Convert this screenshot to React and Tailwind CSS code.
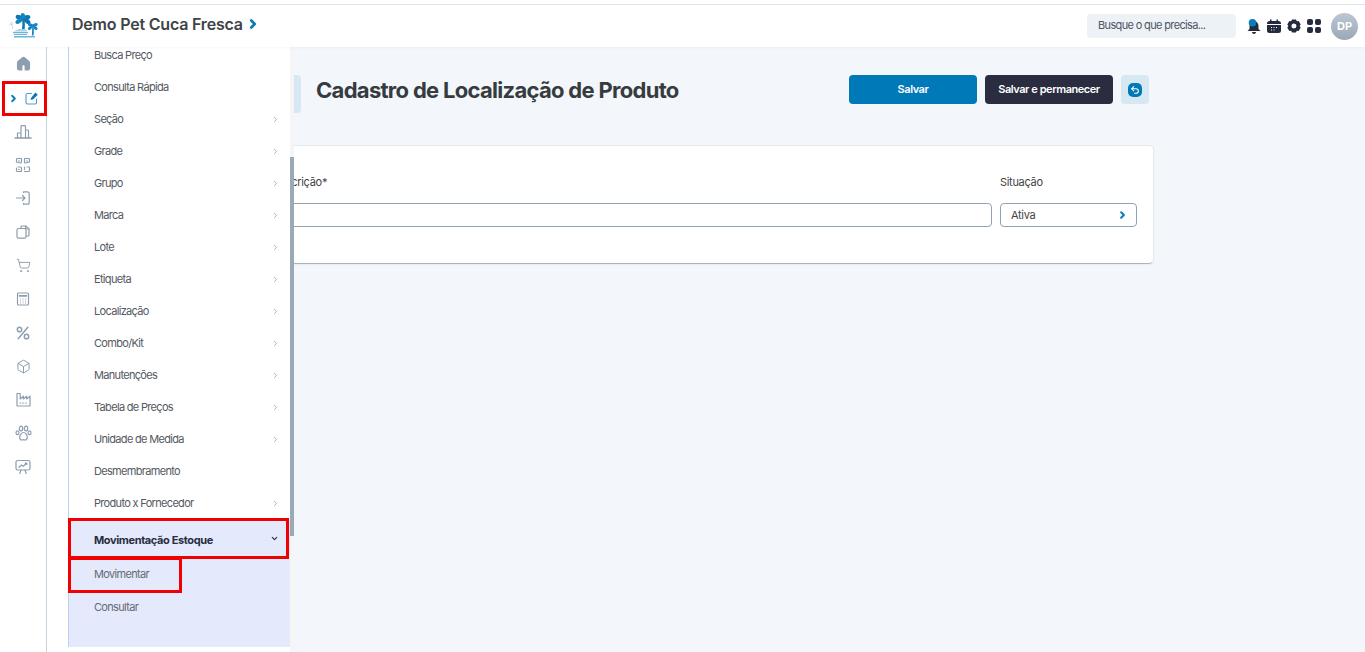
import React from "react";
import { ChevronRight, ChevronDown, Undo2, ShoppingCart, Box } from "lucide-react";

const font = { fontFamily: "Inter, 'Liberation Sans', sans-serif" };
const G = "#8d9eae";

function Svg({ size = 16, box = 16, children, sw = 1.2 }) {
  return (
    <svg viewBox={`0 0 ${box} ${box}`} width={size} height={size} fill="none" stroke={G} strokeWidth={sw} strokeLinecap="round" strokeLinejoin="round">
      {children}
    </svg>
  );
}

const HomeI = () => (
  <svg viewBox="0 0 16 16" width="15" height="15">
    <path fillRule="evenodd" fill={G} d="M8 .8c.6 0 1 .2 1.500.6l4.600 3.800c.6.5.9 1.100.9 1.900V13a2.500 2.500 0 0 1-2.500 2.500H3.500A2.500 2.500 0 0 1 1 13V7.100c0-.8.3-1.400.9-1.900l4.600-3.800C7 1 7.400.8 8 .8zM6.800 15.500h2.400V11a1.200 1.200 0 0 0-2.400 0z" />
  </svg>
);
const ShareI = () => (
  <svg viewBox="0 0 14 14" width="14" height="14" fill="none">
    <path d="M6.500 2.500H2.500A1.500 1.500 0 0 0 1 4v7.500A1.500 1.500 0 0 0 2.500 13H10a1.500 1.500 0 0 0 1.500-1.500V8" stroke="#4f9cc8" strokeWidth="1.100" strokeLinecap="round" />
    <path d="M5.500 8.800 6 7 10.300 1.600 12.800 3.700 8 8.600z" fill="#0f78b4" />
  </svg>
);
const BuildI = () => (
  <Svg size={18} box={18}>
    <path d="M1 16h16" strokeWidth="1.500" />
    <path d="M3.500 16v-5h3.500M7 16V4.500c0-.5.300-.8.800-.8h2.900c.5 0 .8.300.8.800V16M11.500 8h2.200c.5 0 .8.300.8.800V16" />
  </Svg>
);
const QrI = () => (
  <Svg size={16}>
    <path d="M1.500 5V2.500a1 1 0 0 1 1-1H6.500v3.500a1 1 0 0 1-1 1zM14.500 5V2.500a1 1 0 0 0-1-1H9.500v3.500a1 1 0 0 0 1 1zM1.500 11v2.500a1 1 0 0 0 1 1H6.500V11a1 1 0 0 0-1-1H3M9.500 14.500h4a1 1 0 0 0 1-1V11M9.500 10v2.500M12 10h2.500" />
    <path d="M4 4h.1M12 4h.1M4 12.400h.1" strokeWidth="1.500" />
  </Svg>
);
const LoginI = () => (
  <Svg size={16}>
    <path d="M8.500 2.500V1.800h3.700a2 2 0 0 1 2 2v8.400a2 2 0 0 1-2 2H8.500v-.8" />
    <path d="M1.500 8h8.500M7.500 5.500 10 8l-2.500 2.500" />
  </Svg>
);
const CopyI = () => (
  <Svg size={14} box={14}>
    <path d="M5 3V2a1 1 0 0 1 1-1h3.800L13 4v6a1 1 0 0 1-1 1h-2" />
    <rect x="1" y="3.500" width="9" height="9.700" rx="1.500" />
    <path d="M9.500 1v3H13" />
  </Svg>
);
const CalcI = () => (
  <Svg size={14} box={14}>
    <rect x="1.500" y="1" width="11" height="12" rx="1" />
    <path d="M3.500 3.800h7" strokeWidth="1.800" />
    <path d="M4 7h.8M6.600 7h.8M9.200 7h.8M4 9h.8M6.600 9h.8M9.200 9h.8M4 11h.8M6.600 11h.8M9.200 11h.8" strokeWidth="1" strokeLinecap="butt" />
  </Svg>
);
const PercentI = () => (
  <Svg size={14} box={16} sw={1.7}>
    <path d="M13.500 1.500 2.500 14.500" />
    <ellipse cx="4" cy="4" rx="2.500" ry="2.700" />
    <ellipse cx="12" cy="12" rx="2.500" ry="2.700" />
  </Svg>
);
const FactoryI = () => (
  <Svg size={15} box={15}>
    <path d="M1 14V1.500h3.200V7l3.200-2.800V7l3.200-2.800V7L14 4.200V14z" />
    <path d="M4 11h.8M6.800 11h.8M9.600 11h.8" />
  </Svg>
);
const PawI = () => (
  <Svg size={17} box={17}>
    <ellipse cx="6" cy="3.500" rx="1.700" ry="2.300" />
    <ellipse cx="11" cy="3.500" rx="1.700" ry="2.300" />
    <ellipse cx="2.500" cy="7.800" rx="1.500" ry="1.900" />
    <ellipse cx="14.500" cy="7.800" rx="1.500" ry="1.900" />
    <path d="M8.500 7.500c2 0 3.800 2.500 3.800 4.700 0 1.800-1 2.800-2.300 2.800-.7 0-1-.3-1.500-.3s-.8.3-1.500.3c-1.300 0-2.300-1-2.300-2.800 0-2.200 1.800-4.700 3.800-4.700z" />
  </Svg>
);
const BoardI = () => (
  <Svg size={16}>
    <rect x="1" y="1.500" width="14" height="9.500" rx="1.800" />
    <path d="M4 8.300 6.500 6l1.800 1.300L11.800 4M10.200 4h1.600v1.500" />
    <path d="M6 11l-1.200 3.500M10 11l1.200 3.500" />
  </Svg>
);

function Palm() {
  const frond = (cx, cy, rx, ry, a, fill) => (
    <ellipse cx={cx} cy={cy} rx={rx} ry={ry} fill={fill} transform={`rotate(${a} ${cx} ${cy})`} />
  );
  return (
    <svg viewBox="0 0 30 25" width="30" height="25">
      <path d="M13 6c.6 4 .5 8-.4 12h2.800c.7-4 .6-8 0-12z" fill="#0f78b4" />
      {frond(10.500, 4.500, 4, 2.300, 20, "#0f78b4")}
      {frond(17.500, 4.500, 4, 2.300, -15, "#0f78b4")}
      {frond(10, 8, 4, 2.200, -35, "#1586c4")}
      {frond(18, 8, 4, 2.200, 40, "#0f78b4")}
      {frond(14, 3, 3, 2.200, 80, "#1586c4")}
      <path d="M23 12c.3 3 .2 7-.2 10.500h1.800c.4-3.500.4-7 0-10.500z" fill="#1586c4" />
      {frond(21.500, 12, 2.800, 1.700, 20, "#1586c4")}
      {frond(26, 12, 2.800, 1.700, -20, "#1586c4")}
      {frond(21, 15, 2.500, 1.500, -40, "#1586c4")}
      {frond(26.500, 15, 2.500, 1.500, 40, "#1586c4")}
      <path d="M4 18.500 10 16h6l3 2.500z" fill="#a9d2ea" />
      <path d="M4 19h15v1.300H4zM5 21h13v1H5zM5 23h21v1.400H5z" fill="#6fb3da" />
      <path d="M1.500 10c1.200 1.500 2 3.500 2.300 6" stroke="#b9dbee" strokeWidth="1" fill="none" />
      <path d="M0 12c1.500-.8 3-.8 4 0M2 9c1 .5 1.500 1 2 2" stroke="#b9dbee" strokeWidth=".8" fill="none" />
    </svg>
  );
}

const railIcons = [
  <HomeI />,
  null,
  <BuildI />,
  <QrI />,
  <LoginI />,
  <CopyI />,
  <ShoppingCart size={15} color={G} strokeWidth={1.5} />,
  <CalcI />,
  <PercentI />,
  <Box size={15} color={G} strokeWidth={1.6} />,
  <FactoryI />,
  <PawI />,
  <BoardI />,
];

const items = [
  ["Busca Preço", false], ["Consulta Rápida", false], ["Seção", true], ["Grade", true], ["Grupo", true], ["Marca", true], ["Lote", true], ["Etiqueta", true],
  ["Localização", true], ["Combo/Kit", true], ["Manutenções", true], ["Tabela de Preços", true], ["Unidade de Medida", true], ["Desmembramento", false], ["Produto x Fornecedor", true],
];

export default function App() {
  return (
    <div style={font} className="relative h-[652px] w-[1365px] overflow-hidden bg-[#f3f6fa] flex flex-col">
      <div className="h-[5px] bg-white border-b border-[#e2e5e8] shrink-0" />
      <header className="h-[42px] shrink-0 bg-white flex items-center shadow-[0_1px_3px_rgba(0,0,0,0.04)] z-10">
        <div className="w-[47px] flex justify-center mb-[1px]"><Palm /></div>
        <div className="ml-[25px] mb-[4px] flex items-center gap-[3px] text-[16px] font-semibold tracking-[-0.2px] text-[#3f4347]">
          <span>Demo Pet Cuca Fresca</span>
          <ChevronRight className="w-[14px] h-[16px] text-[#0a7cb8]" strokeWidth={4.5} />
        </div>
        <div className="ml-auto flex items-center pr-[7px]">
          <div className="w-[149px] h-[24px] rounded bg-[#edf2f7] flex items-center pl-[11px] pb-[2px] text-[11px] tracking-[-0.65px] text-[#4b5563]">Busque o que precisa...</div>
          <div className="ml-[11px] flex items-center gap-[6px] text-[#252b3e]">
            <svg viewBox="0 0 14 15" className="w-[14px] h-[15px]">
              <path d="M2.500 7c0-3 2-5 4.500-5s4.500 2 4.500 5v3l2 2H.5l2-2z M5 13h4c0 1-1 2-2 2s-2-1-2-2z" fill="#252b3e" />
              <circle cx="5.500" cy="3.800" r="3.800" fill="#0a7cb8" />
            </svg>
            <svg viewBox="0 0 14 14" className="w-[14px] h-[14px]">
              <path d="M3 .5h1.500V2h5V.5H11V2h.5A2.500 2.500 0 0 1 14 4.500V5H0v-.5A2.500 2.500 0 0 1 2.500 2H3z M0 6h14v5.500a2.500 2.500 0 0 1-2.500 2.500h-9A2.500 2.500 0 0 1 0 11.500z" fill="#252b3e" />
              <path d="M4 8h1v1H4zM6.500 8h1v1h-1zM9 8h1v1H9zM4 10.500h1v1H4zM6.500 10.500h1v1h-1z" fill="#fff" />
            </svg>
            <svg viewBox="0 0 14 14" className="w-[14px] h-[14px]">
              <path fillRule="evenodd" d="M5 .5h4l.8 1.700 1.900-.2 2 3.400-1.100 1.600 1.100 1.600-2 3.400-1.900-.2L9 13.500H5l-.8-1.700-1.900.2-2-3.400L1.400 7 .3 5.400l2-3.400 1.900.2zM7 4.500a2.500 2.500 0 1 0 0 5 2.500 2.500 0 0 0 0-5z" fill="#252b3e" />
            </svg>
            <div className="grid grid-cols-2 gap-[2px]">
              <span className="w-[6px] h-[6px] rounded-[2px] bg-[#252b3e]" />
              <span className="w-[6px] h-[6px] rounded-[2px] bg-[#252b3e]" />
              <span className="w-[6px] h-[6px] rounded-[2px] bg-[#252b3e]" />
              <span className="w-[6px] h-[6px] rounded-[2px] bg-[#252b3e]" />
            </div>
          </div>
          <div className="ml-[10px] w-[27px] h-[27px] rounded-full bg-gradient-to-b from-[#bcc7d2] to-[#9aa9b8] text-white text-[11px] font-bold flex items-center justify-center">DP</div>
        </div>
      </header>

      <div className="flex-1 flex min-h-0">
        <nav className="w-[47px] shrink-0 bg-white border-r border-[#c5d6e0] flex flex-col">
          {railIcons.map((ic, i) => (
            <div key={i} className="h-[33.600px] flex items-center justify-center">
              {ic || (
                <span className="flex items-center gap-[6px] pt-[2px]">
                  <ChevronRight className="w-[11px] h-[13px] text-[#0a7cb8]" strokeWidth={4} />
                  <ShareI />
                </span>
              )}
            </div>
          ))}
        </nav>

        <main className="flex-1 min-w-0 pl-[216px] pr-[216px]">
          <div className="mt-[28px] flex items-start">
            <div className="w-[38px] h-[38px] rounded bg-[#d6e9f3] shrink-0" />
            <h1 className="ml-[15px] text-[22px] leading-[30px] font-bold text-[#363b40] tracking-[-0.7px]">Cadastro de Localização de Produto</h1>
            <div className="ml-auto flex items-start gap-[8px]">
              <button className="w-[128px] h-[29px] rounded bg-[#0079b8] text-white text-[11px] font-semibold tracking-[-0.45px]">Salvar</button>
              <button className="w-[128px] h-[29px] rounded bg-[#292d3f] text-white text-[11px] font-semibold tracking-[-0.45px]">Salvar e permanecer</button>
              <button className="w-[28px] h-[29px] rounded bg-[#d6e9f3] flex items-center justify-center">
                <span className="w-[14px] h-[14px] rounded-[5px] bg-[#0079b8] flex items-center justify-center">
                  <Undo2 className="w-[10px] h-[10px] text-white" strokeWidth={2.5} />
                </span>
              </button>
            </div>
          </div>
          <section className="mt-[32px] h-[119px] w-[891px] bg-white rounded-[5px] border border-[#e6e9ec] border-b-[#a9b4bf] shadow-[0_1px_2px_rgba(0,0,0,0.05)] pl-[8px] pr-[16px] pt-[29px] flex gap-[8px]">
            <div className="flex-1">
              <div className="text-[11px] leading-[14px] tracking-[-0.3px] text-[#3f4347]">Descrição*</div>
              <div className="mt-[14px] h-[24px] rounded-[4px] border border-[#94a3b2] bg-white" />
            </div>
            <div className="w-[137px]">
              <div className="text-[11px] leading-[14px] tracking-[-0.3px] text-[#3f4347]">Situação</div>
              <div className="mt-[14px] h-[24px] rounded-[4px] border border-[#94a3b2] bg-white flex items-center justify-between pl-[10px] pr-[8px] text-[11px] tracking-[-0.3px] text-[#3f4347]">
                <span>Ativa</span>
                <ChevronRight className="w-[11px] h-[12px] text-[#0a7cb8]" strokeWidth={4.5} />
              </div>
            </div>
          </section>
        </main>
      </div>

      {/* Flyout submenu, laid over the page */}
      <div className="absolute left-[47px] top-[47px] bottom-0 w-[247px] bg-white flex">
        <div className="w-[21px] shrink-0" />
        <div className="w-[222px] h-[600px] border-l border-[#bcd0f0] overflow-hidden flex flex-col">
          <div className="-mt-[8px]" />
          {items.map(([t, sub]) => (
            <div key={t} className="h-[32px] shrink-0 flex items-center justify-between pl-[25px] pr-[10px] text-[11px] tracking-[-0.68px] text-[#54595f]">
              <span>{t}</span>
              {sub && <ChevronRight className="w-[9px] h-[9px] text-[#8a97a5]" strokeWidth={2} />}
            </div>
          ))}
          <div className="flex-1 bg-[#e4eafc] flex flex-col pt-[3px]">
            <div className="h-[36px] shrink-0 flex items-center justify-between pl-[25px] pr-[11px] text-[11px] font-bold tracking-[-0.38px] text-[#292d3f]">
              <span>Movimentação Estoque</span>
              <ChevronDown className="w-[9px] h-[9px] text-[#292d3f] mb-[4px]" strokeWidth={3} />
            </div>
            <div className="h-[32px] shrink-0 flex items-center pl-[25px] text-[11px] tracking-[-0.68px] text-[#666b73]">Movimentar</div>
            <div className="h-[34px] shrink-0 flex items-center pl-[25px] text-[11px] tracking-[-0.68px] text-[#666b73]">Consultar</div>
          </div>
        </div>
        <div className="relative w-[4px] bg-[#f5f5f5]">
          <div className="absolute left-0 right-0 top-[110px] h-[379px] bg-[#9aa9b6]" />
        </div>
      </div>

      {/* Red annotation boxes */}
      <div className="absolute left-[2px] top-[81px] w-[45px] h-[35px] border-[3px] border-[#f00000]" />
      <div className="absolute left-[68px] top-[518px] w-[221px] h-[41px] border-[3px] border-[#f00000]" />
      <div className="absolute left-[68px] top-[557px] w-[114px] h-[36px] border-[3px] border-[#f00000]" />
    </div>
  );
}
